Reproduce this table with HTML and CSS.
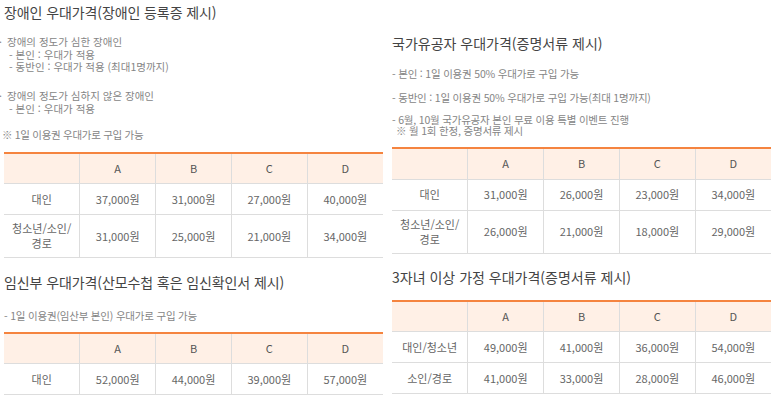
FILE: index.html
```html
<!DOCTYPE html>
<html lang="ko">
<head>
<meta charset="utf-8">
<title>우대가격 안내</title>
<link rel="stylesheet" href="styles.css">
</head>
<body>
<div class="page">
  <div class="col col-left">
    <section class="sec sec-l1">
      <h2 class="title title-l1">장애인 우대가격(장애인 등록증 제시)</h2>
      <div class="notes notes-left">
        <div class="np np-a">
          <span class="ln"><span class="dot">·</span>장애의 정도가 심한 장애인</span>
          <span class="ln sub">- 본인 : 우대가 적용</span>
          <span class="ln sub">- 동반인 : 우대가 적용 (최대1명까지)</span>
        </div>
        <div class="np np-b">
          <span class="ln"><span class="dot">·</span>장애의 정도가 심하지 않은 장애인</span>
          <span class="ln sub">- 본인 : 우대가 적용</span>
        </div>
        <p class="np np-c">※ 1일 이용권 우대가로 구입 가능</p>
      </div>
      <table class="price price-l1">
        <thead><tr><th></th><th>A</th><th>B</th><th>C</th><th>D</th></tr></thead>
        <tbody>
          <tr><td>대인</td><td>37,000원</td><td>31,000원</td><td>27,000원</td><td>40,000원</td></tr>
          <tr><td>청소년/소인/<br>경로</td><td>31,000원</td><td>25,000원</td><td>21,000원</td><td>34,000원</td></tr>
        </tbody>
      </table>
    </section>
    <section class="sec sec-l2">
      <h2 class="title title-l2">임신부 우대가격(산모수첩 혹은 임신확인서 제시)</h2>
      <p class="np np-d">- 1일 이용권(임산부 본인) 우대가로 구입 가능</p>
      <table class="price price-l2">
        <thead><tr><th></th><th>A</th><th>B</th><th>C</th><th>D</th></tr></thead>
        <tbody>
          <tr><td>대인</td><td>52,000원</td><td>44,000원</td><td>39,000원</td><td>57,000원</td></tr>
        </tbody>
      </table>
    </section>
  </div>
  <div class="col col-right">
    <section class="sec sec-r1">
      <h2 class="title title-r1">국가유공자 우대가격(증명서류 제시)</h2>
      <div class="notes notes-right">
        <p class="rp rp-a">- 본인 : 1일 이용권 50% 우대가로 구입 가능</p>
        <p class="rp rp-b">- 동반인 : 1일 이용권 50% 우대가로 구입 가능(최대 1명까지)</p>
        <div class="rp rp-c">
          <span class="ln">- 6월, 10월 국가유공자 본인 무료 이용 특별 이벤트 진행</span>
          <span class="ln ind">※ 월 1회 한정, 증명서류 제시</span>
        </div>
      </div>
      <table class="price price-r1">
        <thead><tr><th></th><th>A</th><th>B</th><th>C</th><th>D</th></tr></thead>
        <tbody>
          <tr><td>대인</td><td>31,000원</td><td>26,000원</td><td>23,000원</td><td>34,000원</td></tr>
          <tr><td>청소년/소인/<br>경로</td><td>26,000원</td><td>21,000원</td><td>18,000원</td><td>29,000원</td></tr>
        </tbody>
      </table>
    </section>
    <section class="sec sec-r2">
      <h2 class="title title-r2">3자녀 이상 가정 우대가격(증명서류 제시)</h2>
      <table class="price price-r2">
        <thead><tr><th></th><th>A</th><th>B</th><th>C</th><th>D</th></tr></thead>
        <tbody>
          <tr><td>대인/청소년</td><td>49,000원</td><td>41,000원</td><td>36,000원</td><td>54,000원</td></tr>
          <tr><td>소인/경로</td><td>41,000원</td><td>33,000원</td><td>28,000원</td><td>46,000원</td></tr>
        </tbody>
      </table>
    </section>
  </div>
</div>
</body>
</html>
```
FILE: styles.css
```css
html, body {
  margin: 0;
  padding: 0;
  background: #ffffff;
}

body {
  font-family: "Noto Sans CJK KR", "Noto Sans", sans-serif;
  color: #777777;
}

.page {
  display: flex;
  width: 773px;
  height: 396px;
  overflow: hidden;
}

.col-left {
  width: 383px;
  flex: none;
}

.col-right {
  width: 379px;
  margin-left: 9px;
  flex: none;
}

.sec {
  display: flex;
  flex-direction: column;
}

.title {
  margin: 0;
  font-size: 14px;
  font-weight: normal;
  line-height: 20px;
  color: #444444;
  white-space: nowrap;
}

.title-l1 {
  margin: 2px 0 0 4px;
  letter-spacing: -0.1px;
}

.title-l2 {
  margin: 14px 0 0 4px;
  letter-spacing: -0.1px;
}

.title-r1 {
  margin-top: 33px;
  letter-spacing: 0;
}

.title-r2 {
  margin-top: 13px;
  letter-spacing: 0;
}

.np, .rp {
  margin: 0;
  font-size: 10.5px;
  white-space: nowrap;
  color: #858585;
}

.ln {
  display: block;
  overflow: visible;
}

.np {
  line-height: 12.5px;
  letter-spacing: 0;
}

.np .ln {
  height: 12.5px;
}

.dot {
  display: inline-block;
  width: 8px;
  margin-left: -1px;
}

.sub {
  padding-left: 9px;
}

.notes-left {
  margin-top: 14px;
}

.np-b {
  margin-top: 16.5px;
}

.np-c {
  margin-top: 14px;
  padding-left: 2px;
  letter-spacing: -0.3px;
}

.np-d {
  margin: 18px 0 0 4px;
  letter-spacing: -0.2px;
}

.notes-right .rp {
  line-height: 11px;
  letter-spacing: -0.2px;
}

.rp .ln {
  height: 11px;
}

.rp-a {
  margin-top: 14.5px;
}

.rp-b {
  margin-top: 13px;
}

.rp-c {
  margin-top: 11px;
}

.ind {
  padding-left: 4px;
}

.price {
  width: 379px;
  border-collapse: collapse;
  table-layout: fixed;
  border-top: 2px solid #f5843f;
  font-size: 11px;
  color: #666666;
  text-align: center;
}

.price tr {
  height: 31px;
}

.price th,
.price td {
  border-left: 1px solid #dddddd;
  border-bottom: 1px solid #dddddd;
  padding: 6px 2px;
  line-height: 15px;
  font-weight: normal;
}

.price th:first-child,
.price td:first-child {
  border-left: none;
}

.price th {
  background: #fff0e6;
  color: #555555;
}

.price-l1 {
  margin: 10px 0 0 4px;
}

.price-l2 {
  margin: 9px 0 0 4px;
}

.price-r1 {
  margin-top: 11.5px;
}

.price-r2 {
  margin-top: 13px;
}
```
